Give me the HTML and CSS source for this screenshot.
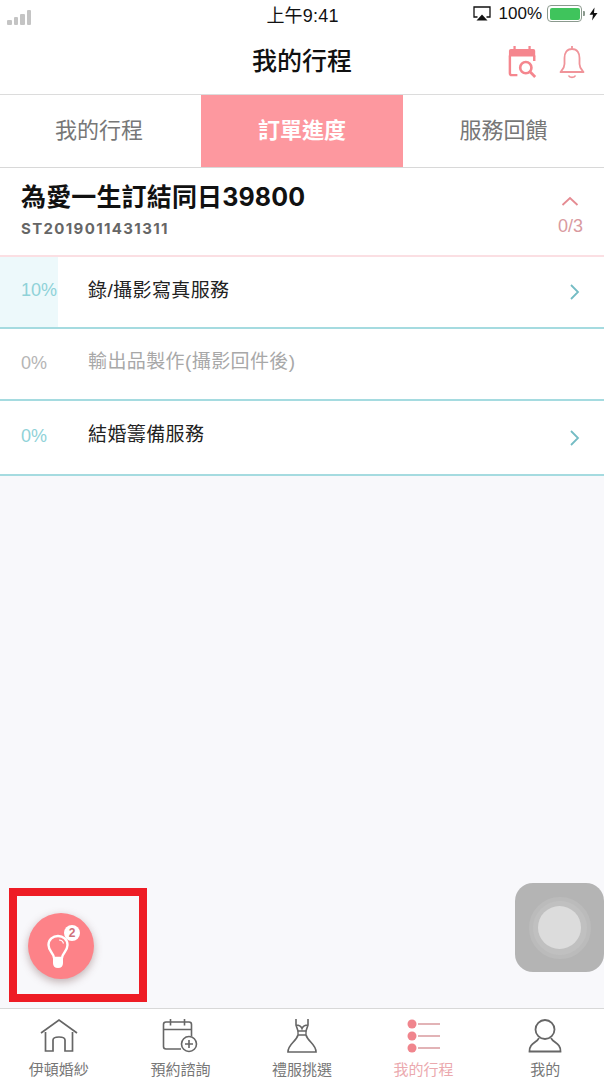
FILE: index.html
```html
<!DOCTYPE html>
<html lang="zh-Hant">
<head>
    <meta charset="UTF-8">
    <meta name="viewport" content="width=device-width, initial-scale=1.0">
    <title>我的行程</title>
    <link rel="stylesheet" href="styles.css">
</head>
<body>
    <div class="phone">
        <!-- Status bar -->
        <div class="status-bar">
            <div class="signal">
                <span class="s1"></span><span class="s2"></span><span class="s3"></span><span class="s4"></span>
            </div>
            <div class="clock">上午9:41</div>
            <div class="status-right">
                <svg class="airplay" width="18" height="15" viewBox="0 0 18 15">
                    <path d="M4.500 11H1V1H17V11H13.500" fill="none" stroke="#111" stroke-width="1.300"/>
                    <path d="M3.500 14.500L9 8.500L14.500 14.500Z" fill="#111"/>
                </svg>
                <span class="percent">100%</span>
                <div class="battery"><div class="battery-fill"></div></div>
                <span class="battery-cap"></span>
                <svg class="bolt" width="9" height="14" viewBox="0 0 9 13">
                    <path d="M5.500 0L0.500 7.200H4L3 13L8.500 5.400H5Z" fill="#111"/>
                </svg>
            </div>
        </div>

        <!-- Title bar -->
        <header class="nav-bar">
            <h1>我的行程</h1>
            <div class="nav-icons">
                <svg width="30" height="36" viewBox="0 0 32 36">
                    <path d="M3 4H27Q29 4 29 6V12H1V6Q1 4 3 4Z" fill="#f5868e"/>
                    <path d="M7 1V5M23 1V5" stroke="#f5868e" stroke-width="2.400"/>
                    <path d="M2 11V30Q2 32 4 32H10M28 11V17" fill="none" stroke="#f5868e" stroke-width="2.600"/>
                    <circle cx="19" cy="24" r="6" fill="none" stroke="#f5868e" stroke-width="2.800"/>
                    <path d="M23.500 28.500L29 34" stroke="#f5868e" stroke-width="3"/>
                </svg>
                <svg width="26" height="36" viewBox="0 0 26 36">
                    <path d="M13 2V5M13 5C7.500 5 5.500 9.500 5.500 14V20C5.500 24 3 26 1.500 28H24.500C23 26 20.500 24 20.500 20V14C20.500 9.500 18.500 5 13 5Z" fill="none" stroke="#f0949a" stroke-width="1.800" stroke-linejoin="round"/>
                    <path d="M9.500 31.500C10.500 34 15.500 34 16.500 31.500" fill="none" stroke="#f0949a" stroke-width="1.600"/>
                </svg>
            </div>
        </header>

        <!-- Tabs -->
        <nav class="tabs">
            <div class="tab">我的行程</div>
            <div class="tab active">訂單進度</div>
            <div class="tab">服務回饋</div>
        </nav>

        <main class="content">
            <!-- Order head -->
            <section class="order-head">
                <div>
                    <div class="order-title">為愛一生訂結同日39800</div>
                    <div class="order-no">ST2019011431311</div>
                </div>
                <div class="order-count">
                    <svg width="18" height="10" viewBox="0 0 18 10">
                        <path d="M1.500 9L9 2L16.500 9" fill="none" stroke="#e58b92" stroke-width="1.800"/>
                    </svg>
                    <span>0/3</span>
                </div>
            </section>

            <!-- Progress rows -->
            <div class="row">
                <div class="row-progress" style="width: 9.6%"></div>
                <span class="row-percent">10%</span>
                <span class="row-name">錄/攝影寫真服務</span>
                <svg class="row-arrow" width="11" height="18" viewBox="0 0 11 18">
                    <path d="M2 2L9 9L2 16" fill="none" stroke="#74bcc4" stroke-width="1.800"/>
                </svg>
            </div>
            <div class="row disabled">
                <span class="row-percent">0%</span>
                <span class="row-name">輸出品製作(攝影回件後)</span>
            </div>
            <div class="row last">
                <span class="row-percent">0%</span>
                <span class="row-name">結婚籌備服務</span>
                <svg class="row-arrow" width="11" height="18" viewBox="0 0 11 18">
                    <path d="M2 2L9 9L2 16" fill="none" stroke="#74bcc4" stroke-width="1.800"/>
                </svg>
            </div>
        </main>

        <!-- Bottom tab bar -->
        <footer class="tab-bar">
            <div class="tab-item">
                <svg width="40" height="36" viewBox="0 0 40 36">
                    <path d="M2 15L20 2L38 15" fill="none" stroke="#666" stroke-width="1.700"/>
                    <path d="M6.500 14V33H14V22C14 18 26 18 26 22V33H33.500V14" fill="none" stroke="#666" stroke-width="1.700"/>
                </svg>
                <span>伊頓婚紗</span>
            </div>
            <div class="tab-item">
                <svg width="36" height="36" viewBox="0 0 36 36">
                    <path d="M19 31H4Q1.500 31 1.500 28.500V6.500Q1.500 4 4 4H27Q29.500 4 29.500 6.500V18" fill="none" stroke="#666" stroke-width="1.600"/>
                    <path d="M1.500 11.500H29.500M8.500 1V7.500M22.500 1V7.500" stroke="#666" stroke-width="1.600"/>
                    <circle cx="27" cy="26" r="7.500" fill="#fff" stroke="#666" stroke-width="1.600"/>
                    <path d="M23 26H31M27 22V30" stroke="#666" stroke-width="1.600"/>
                </svg>
                <span>預約諮詢</span>
            </div>
            <div class="tab-item">
                <svg width="32" height="36" viewBox="0 0 32 36">
                    <path d="M10 1V7L12 13H20L22 7V1M10 7C12 7 15 8 16 10.500C17 8 20 7 22 7" fill="none" stroke="#666" stroke-width="1.600"/>
                    <path d="M12 13V17H20V13" fill="none" stroke="#666" stroke-width="1.400"/>
                    <path d="M12 17C10 24 2 26 2 34H30C30 26 22 24 20 17" fill="none" stroke="#666" stroke-width="1.700"/>
                </svg>
                <span>禮服挑選</span>
            </div>
            <div class="tab-item active">
                <svg width="34" height="36" viewBox="0 0 34 36">
                    <circle cx="5" cy="6" r="4.500" fill="#f0858d"/>
                    <circle cx="5" cy="18" r="4.500" fill="#f0858d"/>
                    <circle cx="5" cy="30" r="4.500" fill="#f0858d"/>
                    <path d="M11 6H33M11 18H33M11 30H33" stroke="#d99a9e" stroke-width="1.500"/>
                </svg>
                <span>我的行程</span>
            </div>
            <div class="tab-item">
                <svg width="34" height="36" viewBox="0 0 34 36">
                    <circle cx="17" cy="11.500" r="9.500" fill="none" stroke="#666" stroke-width="1.800"/>
                    <path d="M11 20C9 25 1 25 1.500 33.500H32.500C33 25 25 25 23 20" fill="none" stroke="#666" stroke-width="1.800"/>
                </svg>
                <span>我的</span>
            </div>
        </footer>

        <!-- Floating things over the page -->
        <div class="fab">
            <svg width="66" height="66" viewBox="0 0 66 66">
                <path d="M26 45C26 40 20.500 38.500 20.500 32C20.500 26.500 25 23 30 23C35 23 39.500 26.500 39.500 32C39.500 38.500 34 40 34 45Z" fill="none" stroke="#fff" stroke-width="2.400" stroke-linejoin="round"/>
                <path d="M31 27C33 27 35 28.500 35.500 30.500" fill="none" stroke="#fff" stroke-width="1.200"/>
                <path d="M25 44.500H35V50Q35 55 30 55Q25 55 25 50Z" fill="#fff"/>
            </svg>
            <span class="fab-badge">2</span>
        </div>
        <div class="assist">
            <div class="assist-ring"><div class="assist-dot"></div></div>
        </div>
        <div class="highlight"></div>
    </div>
</body>
</html>
```

FILE: styles.css
```css
* {
    margin: 0;
    padding: 0;
    box-sizing: border-box;
}

body {
    font-family: 'Liberation Sans', 'Noto Sans CJK TC', sans-serif;
    background: #fff;
    overflow: hidden;
}

.phone {
    position: relative;
    width: 604px;
    height: 1078px;
    display: flex;
    flex-direction: column;
    background: #f8f8fb;
    overflow: hidden;
}

/* Status bar */
.status-bar {
    height: 30px;
    background: #fff;
    display: grid;
    grid-template-columns: 1fr auto 1fr;
    align-items: center;
    padding: 0 6px 3px 7px;
}

.signal {
    display: flex;
    align-items: flex-end;
    gap: 2px;
    height: 15px;
    margin-top: 7px;
}

.signal span {
    width: 4.500px;
    background: #c4c4c4;
    border-radius: 1px;
}

.s1 { height: 5px; }
.s2 { height: 8px; }
.s3 { height: 11px; }
.s4 { height: 15px; }

.clock {
    font-size: 18px;
    letter-spacing: 0.2px;
    color: #111;
}

.status-right {
    display: flex;
    align-items: center;
    justify-content: flex-end;
    color: #111;
}

.percent {
    font-size: 17px;
    margin: 0 5px 0 8px;
}

.battery {
    width: 35px;
    height: 17px;
    border: 1px solid #8b9a8e;
    border-radius: 4px;
    padding: 1.500px;
}

.battery-fill {
    height: 100%;
    background: #3fc45c;
    border-radius: 2px;
}

.battery-cap {
    width: 2px;
    height: 5px;
    background: #8b9a8e;
    margin: 0 4px 0 1px;
    border-radius: 0 1px 1px 0;
}

/* Title bar */
.nav-bar {
    position: relative;
    height: 65px;
    background: #fff;
    border-bottom: 1px solid #dcdcdc;
    display: flex;
    align-items: center;
    justify-content: center;
}

.nav-bar h1 {
    font-size: 25px;
    font-weight: 500;
    color: #111;
    margin-bottom: 6px;
}

.nav-icons {
    position: absolute;
    right: 19px;
    top: 14px;
    display: flex;
    gap: 21px;
}

/* Tabs */
.tabs {
    height: 73px;
    background: #fff;
    border-bottom: 1px solid #d8d8d8;
    display: grid;
    grid-template-columns: 201px 202px 201px;
}

.tab {
    display: flex;
    align-items: center;
    justify-content: center;
    font-size: 22px;
    color: #777;
    padding-bottom: 7px;
}

.tab:first-child {
    padding-right: 3px;
}

.tab.active {
    background: #fd989f;
    color: #fff;
    font-weight: 700;
}

.content {
    flex: 1;
}

/* Order head */
.order-head {
    height: 89px;
    background: #fff;
    border-bottom: 2px solid #fbdfe3;
    display: flex;
    justify-content: space-between;
    padding: 14px 21px 0 21px;
}

.order-title {
    font-family: 'Inter', 'Noto Sans CJK TC', sans-serif;
    font-size: 25px;
    font-weight: 700;
    line-height: 30px;
    letter-spacing: 0.15px;
    color: #111;
}

.order-no {
    font-family: 'Inter', 'Noto Sans CJK TC', sans-serif;
    font-size: 15px;
    font-weight: 700;
    line-height: 20px;
    margin-top: 7px;
    color: #666;
    letter-spacing: 1.35px;
}

.order-count {
    display: flex;
    flex-direction: column;
    align-items: center;
    gap: 10px;
    padding-top: 14px;
    font-size: 18px;
    line-height: 20px;
    color: #d99a9f;
}

/* Progress rows */
.row {
    position: relative;
    height: 72px;
    background: #fff;
    border-bottom: 2px solid #a5dbe0;
    display: flex;
    align-items: center;
    padding: 0 24px 6px 21px;
}

.row.last {
    height: 75px;
    padding-bottom: 8px;
}

.row-progress {
    position: absolute;
    left: 0;
    top: 0;
    bottom: 0;
    background: #edf9fb;
}

.row-percent {
    position: relative;
    width: 67px;
    margin-top: 2px;
    font-size: 18px;
    color: #8fd2d8;
}

.row-name {
    position: relative;
    flex: 1;
    margin-bottom: 2px;
    font-size: 19px;
    letter-spacing: 0.4px;
    color: #222;
}

.row.disabled .row-percent {
    margin-top: 4px;
    color: #b5b5b5;
}

.row.disabled .row-name {
    margin-bottom: 4px;
    color: #a8a8a8;
}

.row.last .row-percent {
    margin-top: 6px;
}

.row-arrow {
    position: relative;
    margin-top: 6px;
}

.row.last .row-arrow {
    margin-top: 8px;
}

/* Bottom tab bar */
.tab-bar {
    height: 70px;
    margin: 0 -2px;
    background: #fff;
    border-top: 1px solid #d8d8d8;
    display: grid;
    grid-template-columns: repeat(5, 1fr);
}

.tab-item {
    display: flex;
    flex-direction: column;
    align-items: center;
    padding-top: 9px;
    font-size: 15px;
    line-height: 20px;
    color: #777;
}

.tab-item svg {
    height: 36px;
    margin-bottom: 6px;
}

.tab-item.active {
    color: #eba9ae;
}

/* Floating button */
.fab {
    position: absolute;
    left: 28px;
    top: 913px;
    width: 66px;
    height: 66px;
    border-radius: 50%;
    background: #fd8288;
    box-shadow: 0 3px 8px rgba(110, 70, 70, 0.4);
}

.fab svg {
    display: block;
}

.fab-badge {
    position: absolute;
    left: 36px;
    top: 12px;
    width: 16px;
    height: 16px;
    border-radius: 50%;
    background: #fff;
    color: #d0707a;
    font-size: 12px;
    font-weight: 700;
    line-height: 16px;
    text-align: center;
}

/* Assistive touch */
.assist {
    position: absolute;
    left: 515px;
    top: 883px;
    width: 89px;
    height: 89px;
    border-radius: 18px;
    background: #b4b4b4;
    display: flex;
    align-items: center;
    justify-content: center;
}

.assist-ring {
    width: 62px;
    height: 62px;
    border-radius: 50%;
    background: #c0c0c0;
    border: 4px solid #bbb;
    display: flex;
    align-items: center;
    justify-content: center;
}

.assist-dot {
    width: 43px;
    height: 43px;
    border-radius: 50%;
    background: #dcdcdc;
}

/* Red marker round the button */
.highlight {
    position: absolute;
    left: 9px;
    top: 888px;
    width: 138px;
    height: 114px;
    border: 8px solid #ee1c25;
}
```
